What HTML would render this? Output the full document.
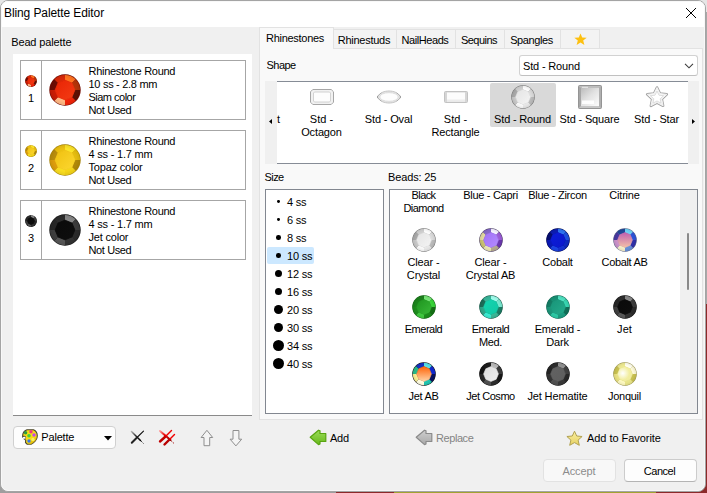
<!DOCTYPE html>
<html><head><meta charset="utf-8"><title>Bling Palette Editor</title>
<style>
html,body{margin:0;padding:0;overflow:hidden;}
body{width:707px;height:493px;position:relative;overflow:hidden;background:#f0f0f0;font-family:"Liberation Sans",sans-serif;font-size:11px;color:#000;}
.a{position:absolute;display:block;}
.t{position:absolute;white-space:nowrap;line-height:13px;font-size:11px;letter-spacing:-0.2px;}
.box{position:absolute;box-sizing:border-box;}
</style></head><body>
<svg width="0" height="0" style="position:absolute"><defs><radialGradient id="edge" cx="0.5" cy="0.5" r="0.5"><stop offset="0.72" stop-color="#000" stop-opacity="0"/><stop offset="0.93" stop-color="#000" stop-opacity="0.06"/><stop offset="1" stop-color="#000" stop-opacity="0.20"/></radialGradient></defs></svg>

<div class="a" style="left:0;top:0;width:707px;height:493px;background:#e6e6e6"></div>
<div class="a" style="left:0;top:480px;width:336px;height:13px;background:#9e9e9e"></div>
<div class="a" style="left:336px;top:480px;width:58px;height:13px;background:#8c2a2a"></div>
<div class="a" style="left:394px;top:480px;width:262px;height:13px;background:#a2a230"></div>
<div class="a" style="left:656px;top:470px;width:51px;height:23px;background:#8c2a2a"></div>
<div class="a" style="left:700px;top:304px;width:7px;height:189px;background:#8c2a2a"></div>
<div class="a" style="left:700px;top:12px;width:7px;height:292px;background:#a8a8a8"></div>
<div class="box" style="left:0px;top:0px;width:706px;height:492px;border:1px solid #a4a4a4;border-radius:8px;background:#f0f0f0;overflow:hidden"><div class="a" style="left:0;top:0;width:706px;height:26px;background:#fff"></div><div class="box" style="left:0;top:0;width:704px;height:490px;border:1px solid #f8f8f8;border-radius:7px"></div></div>
<div class="t" style="left:4px;top:5px;font-size:12px;line-height:16px;letter-spacing:-0.1px">Bling Palette Editor</div>
<svg class="a" style="left:685px;top:7px" width="12" height="12" viewBox="0 0 12 12"><path d="M1 1L11 11M11 1L1 11" stroke="#000" stroke-width="1" fill="none"/></svg>
<div class="t " style="left:11.2px;top:36px;letter-spacing:-0.13px;">Bead palette</div>
<div class="box" style="left:13px;top:54px;width:239px;height:362px;background:#fff;border-bottom:1px solid #8a8a8a"></div>
<div class="box" style="left:20px;top:60px;width:226px;height:60px;border:1px solid #a6a6a6;background:#fff"></div>
<div class="a" style="left:41px;top:60px;width:1px;height:60px;background:#a6a6a6"></div>
<svg class="a" style="left:25.0px;top:75.0px" width="12" height="12" viewBox="-12 -12 24 24"><defs><linearGradient id="g1" x1="0" y1="0" x2="1" y2="1"><stop offset="0" stop-color="#e82404"/><stop offset="1" stop-color="#f43c14"/></linearGradient></defs><circle r="11.75" fill="#8c1004"/><path d="M0.00 -7.40L0.00 -11.30A11.3 11.3 0 0 1 7.99 -7.99L5.23 -5.23Z" fill="#ff7420"/><path d="M5.23 -5.23L7.99 -7.99A11.3 11.3 0 0 1 11.30 0.00L7.40 0.00Z" fill="#b43408"/><path d="M7.40 0.00L11.30 0.00A11.3 11.3 0 0 1 7.99 7.99L5.23 5.23Z" fill="#5c1004"/><path d="M5.23 5.23L7.99 7.99A11.3 11.3 0 0 1 0.00 11.30L0.00 7.40Z" fill="#f02408"/><path d="M0.00 7.40L0.00 11.30A11.3 11.3 0 0 1 -7.99 7.99L-5.23 5.23Z" fill="#ffb884"/><path d="M-5.23 5.23L-7.99 7.99A11.3 11.3 0 0 1 -11.30 0.00L-7.40 0.00Z" fill="#c81c04"/><path d="M-7.40 0.00L-11.30 0.00A11.3 11.3 0 0 1 -7.99 -7.99L-5.23 -5.23Z" fill="#6c0c04"/><path d="M-5.23 -5.23L-7.99 -7.99A11.3 11.3 0 0 1 -0.00 -11.30L-0.00 -7.40Z" fill="#d82808"/><polygon points="0.00,-7.40 5.23,-5.23 7.40,0.00 5.23,5.23 0.00,7.40 -5.23,5.23 -7.40,0.00 -5.23,-5.23" fill="url(#g1)" stroke="url(#g1)" stroke-width="0.6" stroke-linejoin="round"/><circle r="11.75" fill="url(#edge)"/></svg>
<svg class="a" style="left:49.0px;top:74.0px" width="32" height="32" viewBox="-12 -12 24 24"><defs><linearGradient id="g2" x1="0" y1="0" x2="1" y2="1"><stop offset="0" stop-color="#e82404"/><stop offset="1" stop-color="#f43c14"/></linearGradient></defs><circle r="11.75" fill="#8c1004"/><path d="M0.00 -7.40L0.00 -11.30A11.3 11.3 0 0 1 7.99 -7.99L5.23 -5.23Z" fill="#ff7420"/><path d="M5.23 -5.23L7.99 -7.99A11.3 11.3 0 0 1 11.30 0.00L7.40 0.00Z" fill="#b43408"/><path d="M7.40 0.00L11.30 0.00A11.3 11.3 0 0 1 7.99 7.99L5.23 5.23Z" fill="#5c1004"/><path d="M5.23 5.23L7.99 7.99A11.3 11.3 0 0 1 0.00 11.30L0.00 7.40Z" fill="#f02408"/><path d="M0.00 7.40L0.00 11.30A11.3 11.3 0 0 1 -7.99 7.99L-5.23 5.23Z" fill="#ffb884"/><path d="M-5.23 5.23L-7.99 7.99A11.3 11.3 0 0 1 -11.30 0.00L-7.40 0.00Z" fill="#c81c04"/><path d="M-7.40 0.00L-11.30 0.00A11.3 11.3 0 0 1 -7.99 -7.99L-5.23 -5.23Z" fill="#6c0c04"/><path d="M-5.23 -5.23L-7.99 -7.99A11.3 11.3 0 0 1 -0.00 -11.30L-0.00 -7.40Z" fill="#d82808"/><polygon points="0.00,-7.40 5.23,-5.23 7.40,0.00 5.23,5.23 0.00,7.40 -5.23,5.23 -7.40,0.00 -5.23,-5.23" fill="url(#g2)" stroke="url(#g2)" stroke-width="0.6" stroke-linejoin="round"/><circle r="11.75" fill="url(#edge)"/></svg>
<div class="t " style="left:21px;top:92px;width:20px;text-align:center;">1</div>
<div class="t " style="left:88.5px;top:65px;letter-spacing:-0.28px;">Rhinestone Round</div>
<div class="t " style="left:88.5px;top:78px;letter-spacing:-0.29px;">10 ss - 2.8 mm</div>
<div class="t " style="left:88.5px;top:91px;letter-spacing:-0.51px;">Siam color</div>
<div class="t " style="left:88.5px;top:104px;letter-spacing:-0.38px;">Not Used</div>
<div class="box" style="left:20px;top:130px;width:226px;height:60px;border:1px solid #a6a6a6;background:#fff"></div>
<div class="a" style="left:41px;top:130px;width:1px;height:60px;background:#a6a6a6"></div>
<svg class="a" style="left:25.0px;top:145.0px" width="12" height="12" viewBox="-12 -12 24 24"><defs><linearGradient id="g3" x1="0" y1="0" x2="1" y2="1"><stop offset="0" stop-color="#f0c010"/><stop offset="1" stop-color="#fcd830"/></linearGradient></defs><circle r="11.75" fill="#c8a00c"/><path d="M0.00 -7.40L0.00 -11.30A11.3 11.3 0 0 1 7.99 -7.99L5.23 -5.23Z" fill="#fce428"/><path d="M5.23 -5.23L7.99 -7.99A11.3 11.3 0 0 1 11.30 0.00L7.40 0.00Z" fill="#e4bc10"/><path d="M7.40 0.00L11.30 0.00A11.3 11.3 0 0 1 7.99 7.99L5.23 5.23Z" fill="#b08808"/><path d="M5.23 5.23L7.99 7.99A11.3 11.3 0 0 1 0.00 11.30L0.00 7.40Z" fill="#f4d418"/><path d="M0.00 7.40L0.00 11.30A11.3 11.3 0 0 1 -7.99 7.99L-5.23 5.23Z" fill="#f8dc20"/><path d="M-5.23 5.23L-7.99 7.99A11.3 11.3 0 0 1 -11.30 0.00L-7.40 0.00Z" fill="#dc9c0c"/><path d="M-7.40 0.00L-11.30 0.00A11.3 11.3 0 0 1 -7.99 -7.99L-5.23 -5.23Z" fill="#b88c0c"/><path d="M-5.23 -5.23L-7.99 -7.99A11.3 11.3 0 0 1 -0.00 -11.30L-0.00 -7.40Z" fill="#ecc010"/><polygon points="0.00,-7.40 5.23,-5.23 7.40,0.00 5.23,5.23 0.00,7.40 -5.23,5.23 -7.40,0.00 -5.23,-5.23" fill="url(#g3)" stroke="url(#g3)" stroke-width="0.6" stroke-linejoin="round"/><circle r="11.75" fill="url(#edge)"/></svg>
<svg class="a" style="left:49.0px;top:144.0px" width="32" height="32" viewBox="-12 -12 24 24"><defs><linearGradient id="g4" x1="0" y1="0" x2="1" y2="1"><stop offset="0" stop-color="#f0c010"/><stop offset="1" stop-color="#fcd830"/></linearGradient></defs><circle r="11.75" fill="#c8a00c"/><path d="M0.00 -7.40L0.00 -11.30A11.3 11.3 0 0 1 7.99 -7.99L5.23 -5.23Z" fill="#fce428"/><path d="M5.23 -5.23L7.99 -7.99A11.3 11.3 0 0 1 11.30 0.00L7.40 0.00Z" fill="#e4bc10"/><path d="M7.40 0.00L11.30 0.00A11.3 11.3 0 0 1 7.99 7.99L5.23 5.23Z" fill="#b08808"/><path d="M5.23 5.23L7.99 7.99A11.3 11.3 0 0 1 0.00 11.30L0.00 7.40Z" fill="#f4d418"/><path d="M0.00 7.40L0.00 11.30A11.3 11.3 0 0 1 -7.99 7.99L-5.23 5.23Z" fill="#f8dc20"/><path d="M-5.23 5.23L-7.99 7.99A11.3 11.3 0 0 1 -11.30 0.00L-7.40 0.00Z" fill="#dc9c0c"/><path d="M-7.40 0.00L-11.30 0.00A11.3 11.3 0 0 1 -7.99 -7.99L-5.23 -5.23Z" fill="#b88c0c"/><path d="M-5.23 -5.23L-7.99 -7.99A11.3 11.3 0 0 1 -0.00 -11.30L-0.00 -7.40Z" fill="#ecc010"/><polygon points="0.00,-7.40 5.23,-5.23 7.40,0.00 5.23,5.23 0.00,7.40 -5.23,5.23 -7.40,0.00 -5.23,-5.23" fill="url(#g4)" stroke="url(#g4)" stroke-width="0.6" stroke-linejoin="round"/><circle r="11.75" fill="url(#edge)"/></svg>
<div class="t " style="left:21px;top:162px;width:20px;text-align:center;">2</div>
<div class="t " style="left:88.5px;top:135px;letter-spacing:-0.28px;">Rhinestone Round</div>
<div class="t " style="left:88.5px;top:148px;">4 ss - 1.7 mm</div>
<div class="t " style="left:88.5px;top:161px;">Topaz color</div>
<div class="t " style="left:88.5px;top:174px;letter-spacing:-0.38px;">Not Used</div>
<div class="box" style="left:20px;top:200px;width:226px;height:60px;border:1px solid #a6a6a6;background:#fff"></div>
<div class="a" style="left:41px;top:200px;width:1px;height:60px;background:#a6a6a6"></div>
<svg class="a" style="left:25.0px;top:215.0px" width="12" height="12" viewBox="-12 -12 24 24"><defs><linearGradient id="g5" x1="0" y1="0" x2="1" y2="1"><stop offset="0" stop-color="#0a0a0a"/><stop offset="1" stop-color="#0e0e0e"/></linearGradient></defs><circle r="11.75" fill="#1a1a1a"/><path d="M0.00 -7.40L0.00 -11.30A11.3 11.3 0 0 1 7.99 -7.99L5.23 -5.23Z" fill="#868686"/><path d="M5.23 -5.23L7.99 -7.99A11.3 11.3 0 0 1 11.30 0.00L7.40 0.00Z" fill="#3c3c3c"/><path d="M7.40 0.00L11.30 0.00A11.3 11.3 0 0 1 7.99 7.99L5.23 5.23Z" fill="#2a2a2a"/><path d="M5.23 5.23L7.99 7.99A11.3 11.3 0 0 1 0.00 11.30L0.00 7.40Z" fill="#323232"/><path d="M0.00 7.40L0.00 11.30A11.3 11.3 0 0 1 -7.99 7.99L-5.23 5.23Z" fill="#565656"/><path d="M-5.23 5.23L-7.99 7.99A11.3 11.3 0 0 1 -11.30 0.00L-7.40 0.00Z" fill="#3e3e3e"/><path d="M-7.40 0.00L-11.30 0.00A11.3 11.3 0 0 1 -7.99 -7.99L-5.23 -5.23Z" fill="#262626"/><path d="M-5.23 -5.23L-7.99 -7.99A11.3 11.3 0 0 1 -0.00 -11.30L-0.00 -7.40Z" fill="#2c2c2c"/><polygon points="0.00,-7.40 5.23,-5.23 7.40,0.00 5.23,5.23 0.00,7.40 -5.23,5.23 -7.40,0.00 -5.23,-5.23" fill="url(#g5)" stroke="url(#g5)" stroke-width="0.6" stroke-linejoin="round"/><circle r="11.75" fill="url(#edge)"/></svg>
<svg class="a" style="left:49.0px;top:214.0px" width="32" height="32" viewBox="-12 -12 24 24"><defs><linearGradient id="g6" x1="0" y1="0" x2="1" y2="1"><stop offset="0" stop-color="#0a0a0a"/><stop offset="1" stop-color="#0e0e0e"/></linearGradient></defs><circle r="11.75" fill="#1a1a1a"/><path d="M0.00 -7.40L0.00 -11.30A11.3 11.3 0 0 1 7.99 -7.99L5.23 -5.23Z" fill="#868686"/><path d="M5.23 -5.23L7.99 -7.99A11.3 11.3 0 0 1 11.30 0.00L7.40 0.00Z" fill="#3c3c3c"/><path d="M7.40 0.00L11.30 0.00A11.3 11.3 0 0 1 7.99 7.99L5.23 5.23Z" fill="#2a2a2a"/><path d="M5.23 5.23L7.99 7.99A11.3 11.3 0 0 1 0.00 11.30L0.00 7.40Z" fill="#323232"/><path d="M0.00 7.40L0.00 11.30A11.3 11.3 0 0 1 -7.99 7.99L-5.23 5.23Z" fill="#565656"/><path d="M-5.23 5.23L-7.99 7.99A11.3 11.3 0 0 1 -11.30 0.00L-7.40 0.00Z" fill="#3e3e3e"/><path d="M-7.40 0.00L-11.30 0.00A11.3 11.3 0 0 1 -7.99 -7.99L-5.23 -5.23Z" fill="#262626"/><path d="M-5.23 -5.23L-7.99 -7.99A11.3 11.3 0 0 1 -0.00 -11.30L-0.00 -7.40Z" fill="#2c2c2c"/><polygon points="0.00,-7.40 5.23,-5.23 7.40,0.00 5.23,5.23 0.00,7.40 -5.23,5.23 -7.40,0.00 -5.23,-5.23" fill="url(#g6)" stroke="url(#g6)" stroke-width="0.6" stroke-linejoin="round"/><circle r="11.75" fill="url(#edge)"/></svg>
<div class="t " style="left:21px;top:232px;width:20px;text-align:center;">3</div>
<div class="t " style="left:88.5px;top:205px;letter-spacing:-0.28px;">Rhinestone Round</div>
<div class="t " style="left:88.5px;top:218px;">4 ss - 1.7 mm</div>
<div class="t " style="left:88.5px;top:231px;">Jet color</div>
<div class="t " style="left:88.5px;top:244px;letter-spacing:-0.38px;">Not Used</div>
<div class="box" style="left:13px;top:426px;width:103px;height:23px;border:1px solid #d0d0d0;border-radius:4px;background:#fdfdfd"></div>
<svg class="a" style="left:22px;top:429px" width="16" height="16" viewBox="0 0 16 16"><path d="M5 .800H11.500C13.800 1.800 15.300 4.200 15.300 6.800C15.300 10.200 13.400 12.200 11 14L9 15.300H5.300L3.500 13.500L3.700 11.200L2 9.800C3.200 9.600 3.900 8.600 3.300 7.800C2.500 6.800 1 7.200 .700 8.300C.300 4.800 1.800 2 5 .800Z" fill="#f6dc14" stroke="#4a4632" stroke-width="1.100" stroke-linejoin="round"/><path d="M15 8C14.600 10.600 13 12.500 11 14L9 15.300H6L12 9Z" fill="#e6bc08" opacity="0.700"/><ellipse cx="2.300" cy="8.800" rx="1.300" ry="1" fill="#fff"/><circle cx="3.600" cy="3.800" r="1.700" fill="#2c9c3c"/><circle cx="9" cy="2.800" r="1.700" fill="#f03484"/><circle cx="7" cy="6.700" r="1.800" fill="#44d03c"/><circle cx="12" cy="6" r="1.700" fill="#c244f0"/><circle cx="7" cy="12" r="1.700" fill="#3474f0"/><circle cx="11" cy="10.500" r="1.700" fill="#f8f064"/></svg>
<div class="t " style="left:41.3px;top:431px;letter-spacing:-0.18px;">Palette</div>
<svg class="a" style="left:104px;top:436px" width="8" height="5" viewBox="0 0 8 5"><path d="M0 0H8L4 4.500Z" fill="#000"/></svg>
<svg class="a" style="left:130px;top:430px" width="16" height="16" viewBox="0 0 16 16"><defs><linearGradient id="xg" x1="0" y1="0" x2="1" y2="1"><stop offset="0" stop-color="#b0b0b0"/><stop offset="0.450" stop-color="#303030"/><stop offset="1" stop-color="#000"/></linearGradient></defs><path d="M1.500 1.500L10.500 10.500" stroke="url(#xg)" stroke-width="1.500" fill="none" stroke-linecap="round"/><path d="M11.300 11.300L13.700 13.700" stroke="#000" stroke-width="1" stroke-dasharray="1 1" fill="none"/><path d="M13.500 1.200L6.500 8" stroke="#111" stroke-width="1.100" fill="none" stroke-linecap="round"/><path d="M6.500 8L1.800 12.700" stroke="#222" stroke-width="2" fill="none" stroke-linecap="round"/></svg>
<svg class="a" style="left:158px;top:429px" width="18" height="18" viewBox="0 0 18 18"><defs><linearGradient id="xr" x1="0" y1="0" x2="1" y2="1"><stop offset="0" stop-color="#ff9c9c"/><stop offset="0.450" stop-color="#e80000"/><stop offset="1" stop-color="#a00000"/></linearGradient></defs><path d="M2 2L12.500 11" stroke="url(#xr)" stroke-width="2" fill="none" stroke-linecap="round"/><path d="M13.300 12L16.200 14.600" stroke="#a00000" stroke-width="1" stroke-dasharray="1.200 1" fill="none"/><path d="M13.500 1.500L7 8" stroke="#f00000" stroke-width="1.400" fill="none" stroke-linecap="round"/><path d="M7 8L2 12.500" stroke="#c00000" stroke-width="2.400" fill="none" stroke-linecap="round"/><path d="M16.500 5.500L11 11" stroke="#f00000" stroke-width="1.400" fill="none" stroke-linecap="round"/><path d="M11 11L6.500 15.500" stroke="#b80000" stroke-width="2.400" fill="none" stroke-linecap="round"/></svg>
<svg class="a" style="left:200px;top:429px" width="14" height="18" viewBox="0 0 14 18"><path d="M6.900 1.300L12.700 8.500H9.700V16.700H4V8.500H1.100Z" fill="#f4f4f4" stroke="#8e8e8e" stroke-width="1" stroke-linejoin="miter"/></svg>
<svg class="a" style="left:229px;top:429px" width="14" height="18" viewBox="0 0 14 18"><path d="M6.900 16.900L12.700 10.200H9.900V1.500H4V10.200H1.100Z" fill="#f4f4f4" stroke="#8e8e8e" stroke-width="1" stroke-linejoin="miter"/></svg>
<div class="box" style="left:259px;top:48px;width:444px;height:372px;background:#f9f9f9;border:1px solid #e2e2e2"></div>
<div class="box" style="left:333px;top:29px;width:64px;height:20px;background:#f3f3f3;border:1px solid #e2e2e2"></div>
<div class="t " style="left:332.5px;top:34px;letter-spacing:-0.27px;width:63px;text-align:center;">Rhinestuds</div>
<div class="box" style="left:396px;top:29px;width:60px;height:20px;background:#f3f3f3;border:1px solid #e2e2e2"></div>
<div class="t " style="left:395.5px;top:34px;letter-spacing:-0.44px;width:59px;text-align:center;">NailHeads</div>
<div class="box" style="left:455px;top:29px;width:50px;height:20px;background:#f3f3f3;border:1px solid #e2e2e2"></div>
<div class="t " style="left:454.5px;top:34px;letter-spacing:-0.52px;width:49px;text-align:center;">Sequins</div>
<div class="box" style="left:504px;top:29px;width:57px;height:20px;background:#f3f3f3;border:1px solid #e2e2e2"></div>
<div class="t " style="left:503.5px;top:34px;letter-spacing:-0.39px;width:56px;text-align:center;">Spangles</div>
<div class="box" style="left:560px;top:29px;width:40px;height:20px;background:#f3f3f3;border:1px solid #e2e2e2"></div>
<div class="box" style="left:259px;top:27px;width:75px;height:22px;background:#f9f9f9;border:1px solid #e2e2e2;border-bottom:none"></div>
<div class="t " style="left:266px;top:32px;letter-spacing:-0.28px;">Rhinestones</div>
<svg class="a" style="left:574px;top:33px" width="13" height="13" viewBox="-6.500 -6.500 13 13"><path d="M0 -6L1.700 -1.900L6.200 -1.700L2.700 1.100L3.900 5.500L0 3L-3.900 5.500L-2.700 1.100L-6.200 -1.700L-1.700 -1.900Z" fill="#fdc010"/></svg>
<div class="t " style="left:266.5px;top:59px;letter-spacing:-0.52px;">Shape</div>
<div class="box" style="left:519px;top:55px;width:179px;height:21px;border:1px solid #d2d2d2;border-bottom-color:#c0c0c0;border-radius:3px;background:#fff"></div>
<div class="t " style="left:523px;top:60px;letter-spacing:-0.17px;">Std - Round</div>
<svg class="a" style="left:684px;top:62px" width="11" height="7" viewBox="0 0 11 7"><path d="M1 1.800L5 5.800L9 1.800" stroke="#3c3c3c" stroke-width="1.100" fill="none"/></svg>
<div class="box" style="left:277px;top:81px;width:411px;height:83px;background:#fff;border-top:1px solid #868c96;border-bottom:1px solid #868c96"></div>
<div class="a" style="left:265px;top:81px;width:12px;height:83px;background:#f0f0f0"></div>
<div class="a" style="left:688px;top:81px;width:11px;height:83px;background:#f0f0f0"></div>
<svg class="a" style="left:269px;top:118.500px" width="3" height="5" viewBox="0 0 3 5"><path d="M3 0V5L0 2.500Z" fill="#000"/></svg>
<svg class="a" style="left:692px;top:119px" width="3" height="5" viewBox="0 0 3 5"><path d="M0 0V5L3 2.500Z" fill="#000"/></svg>
<div class="box" style="left:490px;top:83px;width:66px;height:44px;background:#d9d9d9;border-radius:2px"></div>
<div class="t " style="left:277px;top:113px;">t</div>
<svg class="a" style="left:309px;top:88px" width="26" height="18" viewBox="0 0 26 18"><defs><linearGradient id="sg1" x1="0" y1="0" x2="1" y2="1"><stop offset="0" stop-color="#fdfdfd"/><stop offset="0.500" stop-color="#e2e2e2"/><stop offset="1" stop-color="#f6f6f6"/></linearGradient></defs><path d="M3.800 1.500H22.200L24.500 3.800V14.200L22.200 16.500H3.800L1.500 14.200V3.800Z" fill="#f1f1f1" stroke="#a6a6a6" stroke-width="1"/><path d="M5.500 4H20.500L21.500 5V13L20.500 14H5.500L4.500 13V5Z" fill="#fdfdfd" stroke="#cdcdcd" stroke-width="0.900"/></svg>
<svg class="a" style="left:376px;top:89px" width="26" height="16" viewBox="0 0 26 16"><defs><linearGradient id="og" x1="0" y1="0" x2="1" y2="0"><stop offset="0" stop-color="#8e8e8e"/><stop offset="0.250" stop-color="#c4c4c4"/><stop offset="0.750" stop-color="#c4c4c4"/><stop offset="1" stop-color="#8e8e8e"/></linearGradient></defs><path d="M1.300 8C4 3.500 8.500 2 13 2S22 3.500 24.700 8C22 12.500 17.500 14 13 14S4 12.500 1.300 8Z" fill="#e6e6e6" stroke="url(#og)" stroke-width="1"/><ellipse cx="13" cy="8" rx="9.200" ry="4.300" fill="#fdfdfd" stroke="#d6d6d6" stroke-width="0.700"/></svg>
<svg class="a" style="left:444px;top:91px" width="24" height="12" viewBox="0 0 24 12"><rect x="0.500" y="0.500" width="23" height="11" rx="1" fill="#d6d6d6" stroke="#c2c2c2"/><rect x="3" y="1.500" width="18" height="9" fill="#fcfcfc"/><rect x="3" y="8.500" width="18" height="2" fill="#ececec"/></svg>
<svg class="a" style="left:511.0px;top:84.5px" width="24" height="24" viewBox="-12 -12 24 24"><defs><linearGradient id="g7" x1="0" y1="0" x2="1" y2="1"><stop offset="0" stop-color="#e4e4e4"/><stop offset="1" stop-color="#f4f4f4"/></linearGradient></defs><circle r="11.75" fill="#8e8e8e"/><path d="M0.00 -7.40L0.00 -11.30A11.3 11.3 0 0 1 7.99 -7.99L5.23 -5.23Z" fill="#fcfcfc"/><path d="M5.23 -5.23L7.99 -7.99A11.3 11.3 0 0 1 11.30 0.00L7.40 0.00Z" fill="#dadada"/><path d="M7.40 0.00L11.30 0.00A11.3 11.3 0 0 1 7.99 7.99L5.23 5.23Z" fill="#bababa"/><path d="M5.23 5.23L7.99 7.99A11.3 11.3 0 0 1 0.00 11.30L0.00 7.40Z" fill="#e6e6e6"/><path d="M0.00 7.40L0.00 11.30A11.3 11.3 0 0 1 -7.99 7.99L-5.23 5.23Z" fill="#f8f8f8"/><path d="M-5.23 5.23L-7.99 7.99A11.3 11.3 0 0 1 -11.30 0.00L-7.40 0.00Z" fill="#c6c6c6"/><path d="M-7.40 0.00L-11.30 0.00A11.3 11.3 0 0 1 -7.99 -7.99L-5.23 -5.23Z" fill="#a8a8a8"/><path d="M-5.23 -5.23L-7.99 -7.99A11.3 11.3 0 0 1 -0.00 -11.30L-0.00 -7.40Z" fill="#cecece"/><polygon points="0.00,-7.40 5.23,-5.23 7.40,0.00 5.23,5.23 0.00,7.40 -5.23,5.23 -7.40,0.00 -5.23,-5.23" fill="url(#g7)" stroke="url(#g7)" stroke-width="0.6" stroke-linejoin="round"/><circle r="11.75" fill="url(#edge)"/></svg>
<svg class="a" style="left:578px;top:85px" width="24" height="24" viewBox="0 0 24 24"><defs><linearGradient id="sq" x1="0" y1="0" x2="0.900" y2="1"><stop offset="0" stop-color="#bcbcbc"/><stop offset="0.500" stop-color="#e2e2e2"/><stop offset="1" stop-color="#fafafa"/></linearGradient></defs><rect x="0.500" y="0.500" width="23" height="23" rx="1" fill="#a6a6a6" stroke="#949494"/><path d="M1 1H23L21 3H3Z" fill="#bebebe"/><path d="M1 23H23L21 21H3Z" fill="#c6c6c6"/><path d="M23 1V23L21 21V3Z" fill="#b0b0b0"/><rect x="3" y="3" width="18" height="18" fill="url(#sq)"/><rect x="4" y="15.500" width="12" height="3.500" fill="#ffffff" opacity="0.900"/><rect x="4" y="1.800" width="6" height="1" fill="#ececec"/></svg>
<svg class="a" style="left:644px;top:84px" width="26" height="26" viewBox="-13 -13.500 26 26"><path d="M0 -10L2.900 -3.900L9.800 -3.100L4.700 1.600L6.100 8.300L0 5L-6.100 8.300L-4.700 1.600L-9.800 -3.100L-2.900 -3.900Z" fill="#f6f6f6" stroke="#a4a4a4" stroke-width="2.600" stroke-linejoin="round"/><path d="M0 -10L2.900 -3.900L9.800 -3.100L4.700 1.600L6.100 8.300L0 5L-6.100 8.300L-4.700 1.600L-9.800 -3.100L-2.900 -3.900Z" fill="#f8f8f8" stroke="#f2f2f2" stroke-width="1" stroke-linejoin="round"/><path d="M0 -6.500L2 -2.300L6.600 -1.800L3.200 1.300L4.100 5.700L0 3.500L-4.100 5.700L-3.200 1.300L-6.600 -1.800L-2 -2.300Z" fill="#ffffff" stroke="#cfcfcf" stroke-width="0.700" stroke-linejoin="round"/></svg>
<div class="t " style="left:288px;top:113px;letter-spacing:0.01px;width:67px;text-align:center;">Std -</div>
<div class="t " style="left:288px;top:126px;letter-spacing:-0.14px;width:67px;text-align:center;">Octagon</div>
<div class="t " style="left:355px;top:113px;letter-spacing:-0.15px;width:67px;text-align:center;">Std - Oval</div>
<div class="t " style="left:422px;top:113px;letter-spacing:0.01px;width:67px;text-align:center;">Std -</div>
<div class="t " style="left:422px;top:126px;letter-spacing:-0.18px;width:67px;text-align:center;">Rectangle</div>
<div class="t " style="left:489px;top:113px;letter-spacing:-0.17px;width:67px;text-align:center;">Std - Round</div>
<div class="t " style="left:556px;top:113px;letter-spacing:-0.16px;width:67px;text-align:center;">Std - Square</div>
<div class="t " style="left:623px;top:113px;letter-spacing:-0.16px;width:67px;text-align:center;">Std - Star</div>
<div class="t " style="left:264.6px;top:171px;letter-spacing:-0.60px;">Size</div>
<div class="t " style="left:388px;top:171px;letter-spacing:-0.14px;">Beads: 25</div>
<div class="box" style="left:265px;top:189px;width:119px;height:225px;background:#fff;border:1px solid #828790"></div>
<div class="box" style="left:267px;top:247px;width:47px;height:17px;background:#cce8ff;border-radius:2px"></div>
<div class="a" style="left:276.90px;top:200.10px;width:2.8px;height:2.8px;border-radius:50%;background:#000"></div>
<div class="t " style="left:287px;top:195.5px;">4 ss</div>
<div class="a" style="left:276.90px;top:218.10px;width:2.8px;height:2.8px;border-radius:50%;background:#000"></div>
<div class="t " style="left:287px;top:213.5px;">6 ss</div>
<div class="a" style="left:276.00px;top:235.20px;width:4.6px;height:4.6px;border-radius:50%;background:#000"></div>
<div class="t " style="left:287px;top:231.5px;">8 ss</div>
<div class="a" style="left:276.00px;top:253.20px;width:4.6px;height:4.6px;border-radius:50%;background:#000"></div>
<div class="t " style="left:287px;top:249.5px;">10 ss</div>
<div class="a" style="left:274.80px;top:270.00px;width:7px;height:7px;border-radius:50%;background:#000"></div>
<div class="t " style="left:287px;top:267.5px;">12 ss</div>
<div class="a" style="left:274.80px;top:288.00px;width:7px;height:7px;border-radius:50%;background:#000"></div>
<div class="t " style="left:287px;top:285.5px;">16 ss</div>
<div class="a" style="left:273.80px;top:305.00px;width:9px;height:9px;border-radius:50%;background:#000"></div>
<div class="t " style="left:287px;top:303.5px;">20 ss</div>
<div class="a" style="left:273.80px;top:323.00px;width:9px;height:9px;border-radius:50%;background:#000"></div>
<div class="t " style="left:287px;top:321.5px;">30 ss</div>
<div class="a" style="left:272.80px;top:340.00px;width:11px;height:11px;border-radius:50%;background:#000"></div>
<div class="t " style="left:287px;top:339.5px;">34 ss</div>
<div class="a" style="left:272.80px;top:358.00px;width:11px;height:11px;border-radius:50%;background:#000"></div>
<div class="t " style="left:287px;top:357.5px;">40 ss</div>
<div class="box" style="left:389px;top:189px;width:309px;height:225px;background:#fff;border:1px solid #828790"></div>
<div class="a" style="left:680px;top:190px;width:17px;height:223px;background:#f0f0f0"></div>
<div class="a" style="left:687px;top:233px;width:2px;height:57px;background:#8a8a8a;border-radius:1px"></div>
<div class="t " style="left:390px;top:189px;letter-spacing:-0.60px;width:67px;text-align:center;">Black</div>
<div class="t " style="left:390px;top:202px;letter-spacing:-0.54px;width:67px;text-align:center;">Diamond</div>
<div class="t " style="left:457px;top:189px;letter-spacing:-0.29px;width:67px;text-align:center;">Blue - Capri</div>
<div class="t " style="left:524px;top:189px;letter-spacing:-0.29px;width:67px;text-align:center;">Blue - Zircon</div>
<div class="t " style="left:591px;top:189px;letter-spacing:-0.20px;width:67px;text-align:center;">Citrine</div>
<svg class="a" style="left:412.0px;top:228.0px" width="24" height="24" viewBox="-12 -12 24 24"><defs><linearGradient id="g8" x1="0" y1="0" x2="1" y2="1"><stop offset="0" stop-color="#e4e4e4"/><stop offset="1" stop-color="#f4f4f4"/></linearGradient></defs><circle r="11.75" fill="#8e8e8e"/><path d="M0.00 -7.40L0.00 -11.30A11.3 11.3 0 0 1 7.99 -7.99L5.23 -5.23Z" fill="#fcfcfc"/><path d="M5.23 -5.23L7.99 -7.99A11.3 11.3 0 0 1 11.30 0.00L7.40 0.00Z" fill="#dadada"/><path d="M7.40 0.00L11.30 0.00A11.3 11.3 0 0 1 7.99 7.99L5.23 5.23Z" fill="#bababa"/><path d="M5.23 5.23L7.99 7.99A11.3 11.3 0 0 1 0.00 11.30L0.00 7.40Z" fill="#e6e6e6"/><path d="M0.00 7.40L0.00 11.30A11.3 11.3 0 0 1 -7.99 7.99L-5.23 5.23Z" fill="#f8f8f8"/><path d="M-5.23 5.23L-7.99 7.99A11.3 11.3 0 0 1 -11.30 0.00L-7.40 0.00Z" fill="#c6c6c6"/><path d="M-7.40 0.00L-11.30 0.00A11.3 11.3 0 0 1 -7.99 -7.99L-5.23 -5.23Z" fill="#a8a8a8"/><path d="M-5.23 -5.23L-7.99 -7.99A11.3 11.3 0 0 1 -0.00 -11.30L-0.00 -7.40Z" fill="#cecece"/><polygon points="0.00,-7.40 5.23,-5.23 7.40,0.00 5.23,5.23 0.00,7.40 -5.23,5.23 -7.40,0.00 -5.23,-5.23" fill="url(#g8)" stroke="url(#g8)" stroke-width="0.6" stroke-linejoin="round"/><circle r="11.75" fill="url(#edge)"/></svg>
<div class="t " style="left:390px;top:256px;letter-spacing:-0.11px;width:67px;text-align:center;">Clear -</div>
<div class="t " style="left:390px;top:269px;letter-spacing:-0.13px;width:67px;text-align:center;">Crystal</div>
<svg class="a" style="left:479.0px;top:228.0px" width="24" height="24" viewBox="-12 -12 24 24"><defs><linearGradient id="g9" x1="0" y1="0" x2="1" y2="1"><stop offset="0" stop-color="#a070f8"/><stop offset="1" stop-color="#b48cff"/></linearGradient></defs><circle r="11.75" fill="#5c4c7c"/><path d="M0.00 -7.40L0.00 -11.30A11.3 11.3 0 0 1 7.99 -7.99L5.23 -5.23Z" fill="#f4f0ff"/><path d="M5.23 -5.23L7.99 -7.99A11.3 11.3 0 0 1 11.30 0.00L7.40 0.00Z" fill="#9c5cd8"/><path d="M7.40 0.00L11.30 0.00A11.3 11.3 0 0 1 7.99 7.99L5.23 5.23Z" fill="#6c38b0"/><path d="M5.23 5.23L7.99 7.99A11.3 11.3 0 0 1 0.00 11.30L0.00 7.40Z" fill="#b4a890"/><path d="M0.00 7.40L0.00 11.30A11.3 11.3 0 0 1 -7.99 7.99L-5.23 5.23Z" fill="#e8e4b0"/><path d="M-5.23 5.23L-7.99 7.99A11.3 11.3 0 0 1 -11.30 0.00L-7.40 0.00Z" fill="#c8c070"/><path d="M-7.40 0.00L-11.30 0.00A11.3 11.3 0 0 1 -7.99 -7.99L-5.23 -5.23Z" fill="#e0d8a0"/><path d="M-5.23 -5.23L-7.99 -7.99A11.3 11.3 0 0 1 -0.00 -11.30L-0.00 -7.40Z" fill="#8468c8"/><polygon points="0.00,-7.40 5.23,-5.23 7.40,0.00 5.23,5.23 0.00,7.40 -5.23,5.23 -7.40,0.00 -5.23,-5.23" fill="url(#g9)" stroke="url(#g9)" stroke-width="0.6" stroke-linejoin="round"/><circle r="11.75" fill="url(#edge)"/></svg>
<div class="t " style="left:457px;top:256px;letter-spacing:-0.11px;width:67px;text-align:center;">Clear -</div>
<div class="t " style="left:457px;top:269px;letter-spacing:-0.20px;width:67px;text-align:center;">Crystal AB</div>
<svg class="a" style="left:546.0px;top:228.0px" width="24" height="24" viewBox="-12 -12 24 24"><defs><linearGradient id="g10" x1="0" y1="0" x2="1" y2="1"><stop offset="0" stop-color="#0c1cd8"/><stop offset="1" stop-color="#0a18cc"/></linearGradient></defs><circle r="11.75" fill="#040c60"/><path d="M0.00 -7.40L0.00 -11.30A11.3 11.3 0 0 1 7.99 -7.99L5.23 -5.23Z" fill="#2c74f0"/><path d="M5.23 -5.23L7.99 -7.99A11.3 11.3 0 0 1 11.30 0.00L7.40 0.00Z" fill="#1c50e0"/><path d="M7.40 0.00L11.30 0.00A11.3 11.3 0 0 1 7.99 7.99L5.23 5.23Z" fill="#0c28c0"/><path d="M5.23 5.23L7.99 7.99A11.3 11.3 0 0 1 0.00 11.30L0.00 7.40Z" fill="#1430d0"/><path d="M0.00 7.40L0.00 11.30A11.3 11.3 0 0 1 -7.99 7.99L-5.23 5.23Z" fill="#1c44e4"/><path d="M-5.23 5.23L-7.99 7.99A11.3 11.3 0 0 1 -11.30 0.00L-7.40 0.00Z" fill="#0818b8"/><path d="M-7.40 0.00L-11.30 0.00A11.3 11.3 0 0 1 -7.99 -7.99L-5.23 -5.23Z" fill="#040c70"/><path d="M-5.23 -5.23L-7.99 -7.99A11.3 11.3 0 0 1 -0.00 -11.30L-0.00 -7.40Z" fill="#0c1cb0"/><polygon points="0.00,-7.40 5.23,-5.23 7.40,0.00 5.23,5.23 0.00,7.40 -5.23,5.23 -7.40,0.00 -5.23,-5.23" fill="url(#g10)" stroke="url(#g10)" stroke-width="0.6" stroke-linejoin="round"/><circle r="11.75" fill="url(#edge)"/></svg>
<div class="t " style="left:524px;top:256px;letter-spacing:-0.24px;width:67px;text-align:center;">Cobalt</div>
<svg class="a" style="left:613.0px;top:228.0px" width="24" height="24" viewBox="-12 -12 24 24"><defs><linearGradient id="g11" x1="0" y1="0" x2="0" y2="1"><stop offset="0" stop-color="#c060b0"/><stop offset="1" stop-color="#f4c0a8"/></linearGradient></defs><circle r="11.75" fill="#7880a8"/><path d="M0.00 -7.40L0.00 -11.30A11.3 11.3 0 0 1 7.99 -7.99L5.23 -5.23Z" fill="#6cd0f4"/><path d="M5.23 -5.23L7.99 -7.99A11.3 11.3 0 0 1 11.30 0.00L7.40 0.00Z" fill="#2c54d8"/><path d="M7.40 0.00L11.30 0.00A11.3 11.3 0 0 1 7.99 7.99L5.23 5.23Z" fill="#3030a8"/><path d="M5.23 5.23L7.99 7.99A11.3 11.3 0 0 1 0.00 11.30L0.00 7.40Z" fill="#6890d8"/><path d="M0.00 7.40L0.00 11.30A11.3 11.3 0 0 1 -7.99 7.99L-5.23 5.23Z" fill="#f4ecc8"/><path d="M-5.23 5.23L-7.99 7.99A11.3 11.3 0 0 1 -11.30 0.00L-7.40 0.00Z" fill="#c890c8"/><path d="M-7.40 0.00L-11.30 0.00A11.3 11.3 0 0 1 -7.99 -7.99L-5.23 -5.23Z" fill="#4838a0"/><path d="M-5.23 -5.23L-7.99 -7.99A11.3 11.3 0 0 1 -0.00 -11.30L-0.00 -7.40Z" fill="#204898"/><polygon points="0.00,-7.40 5.23,-5.23 7.40,0.00 5.23,5.23 0.00,7.40 -5.23,5.23 -7.40,0.00 -5.23,-5.23" fill="url(#g11)" stroke="url(#g11)" stroke-width="0.6" stroke-linejoin="round"/><circle r="11.75" fill="url(#edge)"/></svg>
<div class="t " style="left:591px;top:256px;letter-spacing:-0.35px;width:67px;text-align:center;">Cobalt AB</div>
<svg class="a" style="left:412.0px;top:295.0px" width="24" height="24" viewBox="-12 -12 24 24"><defs><linearGradient id="g12" x1="0" y1="0" x2="1" y2="1"><stop offset="0" stop-color="#1f941f"/><stop offset="1" stop-color="#38b838"/></linearGradient></defs><circle r="11.75" fill="#187818"/><path d="M0.00 -7.40L0.00 -11.30A11.3 11.3 0 0 1 7.99 -7.99L5.23 -5.23Z" fill="#78e478"/><path d="M5.23 -5.23L7.99 -7.99A11.3 11.3 0 0 1 11.30 0.00L7.40 0.00Z" fill="#38d438"/><path d="M7.40 0.00L11.30 0.00A11.3 11.3 0 0 1 7.99 7.99L5.23 5.23Z" fill="#147014"/><path d="M5.23 5.23L7.99 7.99A11.3 11.3 0 0 1 0.00 11.30L0.00 7.40Z" fill="#1c8c1c"/><path d="M0.00 7.40L0.00 11.30A11.3 11.3 0 0 1 -7.99 7.99L-5.23 5.23Z" fill="#40c840"/><path d="M-5.23 5.23L-7.99 7.99A11.3 11.3 0 0 1 -11.30 0.00L-7.40 0.00Z" fill="#1c8c1c"/><path d="M-7.40 0.00L-11.30 0.00A11.3 11.3 0 0 1 -7.99 -7.99L-5.23 -5.23Z" fill="#1c841c"/><path d="M-5.23 -5.23L-7.99 -7.99A11.3 11.3 0 0 1 -0.00 -11.30L-0.00 -7.40Z" fill="#1c801c"/><polygon points="0.00,-7.40 5.23,-5.23 7.40,0.00 5.23,5.23 0.00,7.40 -5.23,5.23 -7.40,0.00 -5.23,-5.23" fill="url(#g12)" stroke="url(#g12)" stroke-width="0.6" stroke-linejoin="round"/><circle r="11.75" fill="url(#edge)"/></svg>
<div class="t " style="left:390px;top:323px;letter-spacing:-0.50px;width:67px;text-align:center;">Emerald</div>
<svg class="a" style="left:479.0px;top:295.0px" width="24" height="24" viewBox="-12 -12 24 24"><defs><linearGradient id="g13" x1="0" y1="0" x2="1" y2="1"><stop offset="0" stop-color="#14d4b0"/><stop offset="1" stop-color="#10c8a4"/></linearGradient></defs><circle r="11.75" fill="#206c58"/><path d="M0.00 -7.40L0.00 -11.30A11.3 11.3 0 0 1 7.99 -7.99L5.23 -5.23Z" fill="#a0fcec"/><path d="M5.23 -5.23L7.99 -7.99A11.3 11.3 0 0 1 11.30 0.00L7.40 0.00Z" fill="#78e8d0"/><path d="M7.40 0.00L11.30 0.00A11.3 11.3 0 0 1 7.99 7.99L5.23 5.23Z" fill="#1c7c64"/><path d="M5.23 5.23L7.99 7.99A11.3 11.3 0 0 1 0.00 11.30L0.00 7.40Z" fill="#3cb494"/><path d="M0.00 7.40L0.00 11.30A11.3 11.3 0 0 1 -7.99 7.99L-5.23 5.23Z" fill="#3ce8d0"/><path d="M-5.23 5.23L-7.99 7.99A11.3 11.3 0 0 1 -11.30 0.00L-7.40 0.00Z" fill="#30a488"/><path d="M-7.40 0.00L-11.30 0.00A11.3 11.3 0 0 1 -7.99 -7.99L-5.23 -5.23Z" fill="#1c6c58"/><path d="M-5.23 -5.23L-7.99 -7.99A11.3 11.3 0 0 1 -0.00 -11.30L-0.00 -7.40Z" fill="#38b498"/><polygon points="0.00,-7.40 5.23,-5.23 7.40,0.00 5.23,5.23 0.00,7.40 -5.23,5.23 -7.40,0.00 -5.23,-5.23" fill="url(#g13)" stroke="url(#g13)" stroke-width="0.6" stroke-linejoin="round"/><circle r="11.75" fill="url(#edge)"/></svg>
<div class="t " style="left:457px;top:323px;letter-spacing:-0.50px;width:67px;text-align:center;">Emerald</div>
<div class="t " style="left:457px;top:336px;letter-spacing:-0.42px;width:67px;text-align:center;">Med.</div>
<svg class="a" style="left:546.0px;top:295.0px" width="24" height="24" viewBox="-12 -12 24 24"><defs><linearGradient id="g14" x1="0" y1="0" x2="1" y2="1"><stop offset="0" stop-color="#189478"/><stop offset="1" stop-color="#24ac8c"/></linearGradient></defs><circle r="11.75" fill="#147c64"/><path d="M0.00 -7.40L0.00 -11.30A11.3 11.3 0 0 1 7.99 -7.99L5.23 -5.23Z" fill="#50e0c0"/><path d="M5.23 -5.23L7.99 -7.99A11.3 11.3 0 0 1 11.30 0.00L7.40 0.00Z" fill="#38d4b0"/><path d="M7.40 0.00L11.30 0.00A11.3 11.3 0 0 1 7.99 7.99L5.23 5.23Z" fill="#107058"/><path d="M5.23 5.23L7.99 7.99A11.3 11.3 0 0 1 0.00 11.30L0.00 7.40Z" fill="#1c9c80"/><path d="M0.00 7.40L0.00 11.30A11.3 11.3 0 0 1 -7.99 7.99L-5.23 5.23Z" fill="#2cc8a4"/><path d="M-5.23 5.23L-7.99 7.99A11.3 11.3 0 0 1 -11.30 0.00L-7.40 0.00Z" fill="#1c9478"/><path d="M-7.40 0.00L-11.30 0.00A11.3 11.3 0 0 1 -7.99 -7.99L-5.23 -5.23Z" fill="#147c64"/><path d="M-5.23 -5.23L-7.99 -7.99A11.3 11.3 0 0 1 -0.00 -11.30L-0.00 -7.40Z" fill="#189074"/><polygon points="0.00,-7.40 5.23,-5.23 7.40,0.00 5.23,5.23 0.00,7.40 -5.23,5.23 -7.40,0.00 -5.23,-5.23" fill="url(#g14)" stroke="url(#g14)" stroke-width="0.6" stroke-linejoin="round"/><circle r="11.75" fill="url(#edge)"/></svg>
<div class="t " style="left:524px;top:323px;letter-spacing:-0.25px;width:67px;text-align:center;">Emerald -</div>
<div class="t " style="left:524px;top:336px;letter-spacing:-0.18px;width:67px;text-align:center;">Dark</div>
<svg class="a" style="left:613.0px;top:295.0px" width="24" height="24" viewBox="-12 -12 24 24"><defs><linearGradient id="g15" x1="0" y1="0" x2="1" y2="1"><stop offset="0" stop-color="#0a0a0a"/><stop offset="1" stop-color="#0e0e0e"/></linearGradient></defs><circle r="11.75" fill="#1a1a1a"/><path d="M0.00 -7.40L0.00 -11.30A11.3 11.3 0 0 1 7.99 -7.99L5.23 -5.23Z" fill="#868686"/><path d="M5.23 -5.23L7.99 -7.99A11.3 11.3 0 0 1 11.30 0.00L7.40 0.00Z" fill="#3c3c3c"/><path d="M7.40 0.00L11.30 0.00A11.3 11.3 0 0 1 7.99 7.99L5.23 5.23Z" fill="#2a2a2a"/><path d="M5.23 5.23L7.99 7.99A11.3 11.3 0 0 1 0.00 11.30L0.00 7.40Z" fill="#323232"/><path d="M0.00 7.40L0.00 11.30A11.3 11.3 0 0 1 -7.99 7.99L-5.23 5.23Z" fill="#565656"/><path d="M-5.23 5.23L-7.99 7.99A11.3 11.3 0 0 1 -11.30 0.00L-7.40 0.00Z" fill="#3e3e3e"/><path d="M-7.40 0.00L-11.30 0.00A11.3 11.3 0 0 1 -7.99 -7.99L-5.23 -5.23Z" fill="#262626"/><path d="M-5.23 -5.23L-7.99 -7.99A11.3 11.3 0 0 1 -0.00 -11.30L-0.00 -7.40Z" fill="#2c2c2c"/><polygon points="0.00,-7.40 5.23,-5.23 7.40,0.00 5.23,5.23 0.00,7.40 -5.23,5.23 -7.40,0.00 -5.23,-5.23" fill="url(#g15)" stroke="url(#g15)" stroke-width="0.6" stroke-linejoin="round"/><circle r="11.75" fill="url(#edge)"/></svg>
<div class="t " style="left:591px;top:323px;letter-spacing:0.05px;width:67px;text-align:center;">Jet</div>
<svg class="a" style="left:412.0px;top:362.0px" width="24" height="24" viewBox="-12 -12 24 24"><defs><linearGradient id="g16" x1="0" y1="0" x2="0" y2="1"><stop offset="0" stop-color="#ff6408"/><stop offset="1" stop-color="#ffd4a8"/></linearGradient></defs><circle r="11.75" fill="#181818"/><path d="M0.00 -7.40L0.00 -11.30A11.3 11.3 0 0 1 7.99 -7.99L5.23 -5.23Z" fill="#58e0e8"/><path d="M5.23 -5.23L7.99 -7.99A11.3 11.3 0 0 1 11.30 0.00L7.40 0.00Z" fill="#1028d0"/><path d="M7.40 0.00L11.30 0.00A11.3 11.3 0 0 1 7.99 7.99L5.23 5.23Z" fill="#081060"/><path d="M5.23 5.23L7.99 7.99A11.3 11.3 0 0 1 0.00 11.30L0.00 7.40Z" fill="#20c4b0"/><path d="M0.00 7.40L0.00 11.30A11.3 11.3 0 0 1 -7.99 7.99L-5.23 5.23Z" fill="#fffce0"/><path d="M-5.23 5.23L-7.99 7.99A11.3 11.3 0 0 1 -11.30 0.00L-7.40 0.00Z" fill="#f8ec90"/><path d="M-7.40 0.00L-11.30 0.00A11.3 11.3 0 0 1 -7.99 -7.99L-5.23 -5.23Z" fill="#28b888"/><path d="M-5.23 -5.23L-7.99 -7.99A11.3 11.3 0 0 1 -0.00 -11.30L-0.00 -7.40Z" fill="#1430c0"/><polygon points="0.00,-7.40 5.23,-5.23 7.40,0.00 5.23,5.23 0.00,7.40 -5.23,5.23 -7.40,0.00 -5.23,-5.23" fill="url(#g16)" stroke="url(#g16)" stroke-width="0.6" stroke-linejoin="round"/><circle r="11.75" fill="url(#edge)"/></svg>
<div class="t " style="left:390px;top:390px;letter-spacing:-0.33px;width:67px;text-align:center;">Jet AB</div>
<svg class="a" style="left:479.0px;top:362.0px" width="24" height="24" viewBox="-12 -12 24 24"><defs><linearGradient id="g17" x1="0" y1="0" x2="1" y2="1"><stop offset="0" stop-color="#dcdcdc"/><stop offset="1" stop-color="#f0f0f0"/></linearGradient></defs><circle r="11.75" fill="#141414"/><path d="M0.00 -7.40L0.00 -11.30A11.3 11.3 0 0 1 7.99 -7.99L5.23 -5.23Z" fill="#b8b8b8"/><path d="M5.23 -5.23L7.99 -7.99A11.3 11.3 0 0 1 11.30 0.00L7.40 0.00Z" fill="#3c3c3c"/><path d="M7.40 0.00L11.30 0.00A11.3 11.3 0 0 1 7.99 7.99L5.23 5.23Z" fill="#181818"/><path d="M5.23 5.23L7.99 7.99A11.3 11.3 0 0 1 0.00 11.30L0.00 7.40Z" fill="#2c2c2c"/><path d="M0.00 7.40L0.00 11.30A11.3 11.3 0 0 1 -7.99 7.99L-5.23 5.23Z" fill="#505050"/><path d="M-5.23 5.23L-7.99 7.99A11.3 11.3 0 0 1 -11.30 0.00L-7.40 0.00Z" fill="#282828"/><path d="M-7.40 0.00L-11.30 0.00A11.3 11.3 0 0 1 -7.99 -7.99L-5.23 -5.23Z" fill="#141414"/><path d="M-5.23 -5.23L-7.99 -7.99A11.3 11.3 0 0 1 -0.00 -11.30L-0.00 -7.40Z" fill="#1c1c1c"/><polygon points="0.00,-7.40 5.23,-5.23 7.40,0.00 5.23,5.23 0.00,7.40 -5.23,5.23 -7.40,0.00 -5.23,-5.23" fill="url(#g17)" stroke="url(#g17)" stroke-width="0.6" stroke-linejoin="round"/><circle r="11.75" fill="url(#edge)"/></svg>
<div class="t " style="left:457px;top:390px;letter-spacing:-0.45px;width:67px;text-align:center;">Jet Cosmo</div>
<svg class="a" style="left:546.0px;top:362.0px" width="24" height="24" viewBox="-12 -12 24 24"><defs><linearGradient id="g18" x1="0" y1="0" x2="1" y2="1"><stop offset="0" stop-color="#626262"/><stop offset="1" stop-color="#5e5e5e"/></linearGradient></defs><circle r="11.75" fill="#202020"/><path d="M0.00 -7.40L0.00 -11.30A11.3 11.3 0 0 1 7.99 -7.99L5.23 -5.23Z" fill="#909090"/><path d="M5.23 -5.23L7.99 -7.99A11.3 11.3 0 0 1 11.30 0.00L7.40 0.00Z" fill="#404040"/><path d="M7.40 0.00L11.30 0.00A11.3 11.3 0 0 1 7.99 7.99L5.23 5.23Z" fill="#282828"/><path d="M5.23 5.23L7.99 7.99A11.3 11.3 0 0 1 0.00 11.30L0.00 7.40Z" fill="#383838"/><path d="M0.00 7.40L0.00 11.30A11.3 11.3 0 0 1 -7.99 7.99L-5.23 5.23Z" fill="#505050"/><path d="M-5.23 5.23L-7.99 7.99A11.3 11.3 0 0 1 -11.30 0.00L-7.40 0.00Z" fill="#343434"/><path d="M-7.40 0.00L-11.30 0.00A11.3 11.3 0 0 1 -7.99 -7.99L-5.23 -5.23Z" fill="#242424"/><path d="M-5.23 -5.23L-7.99 -7.99A11.3 11.3 0 0 1 -0.00 -11.30L-0.00 -7.40Z" fill="#2c2c2c"/><polygon points="0.00,-7.40 5.23,-5.23 7.40,0.00 5.23,5.23 0.00,7.40 -5.23,5.23 -7.40,0.00 -5.23,-5.23" fill="url(#g18)" stroke="url(#g18)" stroke-width="0.6" stroke-linejoin="round"/><circle r="11.75" fill="url(#edge)"/></svg>
<div class="t " style="left:524px;top:390px;letter-spacing:-0.13px;width:67px;text-align:center;">Jet Hematite</div>
<svg class="a" style="left:613.0px;top:362.0px" width="24" height="24" viewBox="-12 -12 24 24"><defs><linearGradient id="g19" x1="0" y1="0" x2="1" y2="1"><stop offset="0" stop-color="#f4f09c"/><stop offset="1" stop-color="#f0eca0"/></linearGradient><radialGradient id="g19h" cx="0.35" cy="0.45" r="0.45"><stop offset="0" stop-color="#ffffff"/><stop offset="1" stop-color="#ffffff" stop-opacity="0"/></radialGradient></defs><circle r="11.75" fill="#b8b060"/><path d="M0.00 -7.40L0.00 -11.30A11.3 11.3 0 0 1 7.99 -7.99L5.23 -5.23Z" fill="#fffef0"/><path d="M5.23 -5.23L7.99 -7.99A11.3 11.3 0 0 1 11.30 0.00L7.40 0.00Z" fill="#fcf8d8"/><path d="M7.40 0.00L11.30 0.00A11.3 11.3 0 0 1 7.99 7.99L5.23 5.23Z" fill="#c8c050"/><path d="M5.23 5.23L7.99 7.99A11.3 11.3 0 0 1 0.00 11.30L0.00 7.40Z" fill="#e8e488"/><path d="M0.00 7.40L0.00 11.30A11.3 11.3 0 0 1 -7.99 7.99L-5.23 5.23Z" fill="#fcf8c0"/><path d="M-5.23 5.23L-7.99 7.99A11.3 11.3 0 0 1 -11.30 0.00L-7.40 0.00Z" fill="#e8e080"/><path d="M-7.40 0.00L-11.30 0.00A11.3 11.3 0 0 1 -7.99 -7.99L-5.23 -5.23Z" fill="#c8c050"/><path d="M-5.23 -5.23L-7.99 -7.99A11.3 11.3 0 0 1 -0.00 -11.30L-0.00 -7.40Z" fill="#ece890"/><polygon points="0.00,-7.40 5.23,-5.23 7.40,0.00 5.23,5.23 0.00,7.40 -5.23,5.23 -7.40,0.00 -5.23,-5.23" fill="url(#g19)" stroke="url(#g19)" stroke-width="0.6" stroke-linejoin="round"/><polygon points="0.00,-7.40 5.23,-5.23 7.40,0.00 5.23,5.23 0.00,7.40 -5.23,5.23 -7.40,0.00 -5.23,-5.23" fill="url(#g19h)"/><circle r="11.75" fill="url(#edge)"/></svg>
<div class="t " style="left:591px;top:390px;letter-spacing:-0.29px;width:67px;text-align:center;">Jonquil</div>
<svg class="a" style="left:309px;top:429px" width="18" height="17" viewBox="0 0 18 17"><defs><linearGradient id="ag" x1="0" y1="0" x2="0" y2="1"><stop offset="0" stop-color="#9adc58"/><stop offset="1" stop-color="#68b81c"/></linearGradient></defs><path d="M1.200 8.300L9.500 1.200L11 1.800V4.500H16.800V12.500H11V15L9.500 15.600Z" fill="url(#ag)" stroke="#58a410" stroke-width="1.200" stroke-linejoin="round"/></svg>
<div class="t " style="left:330px;top:432px;letter-spacing:-0.24px;">Add</div>
<svg class="a" style="left:415px;top:429px" width="18" height="17" viewBox="0 0 18 17"><defs><linearGradient id="rg" x1="0" y1="0" x2="0" y2="1"><stop offset="0" stop-color="#cfcfcf"/><stop offset="1" stop-color="#a8a8a8"/></linearGradient></defs><path d="M1.200 8.300L9.500 1.200L11 1.800V4.500H16.800V12.500H11V15L9.500 15.600Z" fill="url(#rg)" stroke="#8a8a8a" stroke-width="1.200" stroke-linejoin="round"/></svg>
<div class="t " style="left:436px;top:432px;letter-spacing:-0.43px;color:#848484">Replace</div>
<svg class="a" style="left:566px;top:430px" width="17" height="16" viewBox="-8.500 -8.500 17 16"><defs><linearGradient id="stg" x1="0" y1="0" x2="0" y2="1"><stop offset="0" stop-color="#faf0a4"/><stop offset="1" stop-color="#e6d060"/></linearGradient></defs><path d="M0 -7.300L2.200 -2.500L7.600 -2L3.600 1.600L4.800 6.800L0 4.100L-4.800 6.800L-3.600 1.600L-7.600 -2L-2.200 -2.500Z" fill="url(#stg)" stroke="#b0a050" stroke-width="1" stroke-linejoin="round"/></svg>
<div class="t " style="left:587px;top:432px;letter-spacing:-0.05px;">Add to Favorite</div>
<div class="box" style="left:543px;top:459px;width:73px;height:23px;border:1px solid #e2e2e2;border-radius:4px;background:#f8f8f8"></div>
<div class="t " style="left:542.5px;top:465px;letter-spacing:-0.10px;width:73px;text-align:center;color:#8c8c8c">Accept</div>
<div class="box" style="left:624px;top:459px;width:73px;height:23px;border:1px solid #cccccc;border-bottom-color:#b4b4b4;border-radius:4px;background:#fdfdfd"></div>
<div class="t " style="left:623px;top:465px;letter-spacing:-0.45px;width:73px;text-align:center;">Cancel</div>
</body></html>
